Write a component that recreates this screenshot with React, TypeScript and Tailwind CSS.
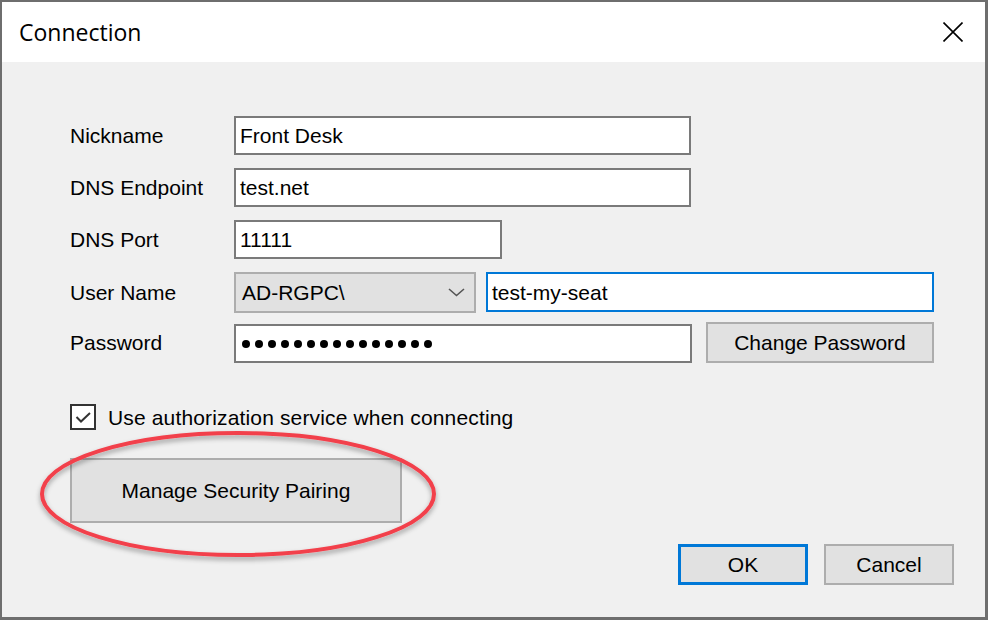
import React from "react";

const font = { fontFamily: '"Liberation Sans", Arial, sans-serif' };

function Label({ children }: { children: React.ReactNode }) {
  return <div className="w-[164px] shrink-0 text-[21px] leading-none text-black">{children}</div>;
}

function TextBox({ value, w, blue }: { value: string; w: string; blue?: boolean }) {
  return (
    <div
      className={`${w} h-full flex items-center bg-white border-2 pl-[4px] text-[21px] leading-none text-black ${
        blue ? "border-[#0078d7]" : "border-[#7a7a7a]"
      }`}
    >
      {value}
    </div>
  );
}

export default function App() {
  const dots = Array.from({ length: 15 });
  return (
    <div
      className="relative w-[988px] h-[620px] bg-[#f0f0f0] border-l-2 border-t-2 border-r-[3px] border-b-[3px] border-[#6e6e6e] flex flex-col overflow-hidden"
      style={font}
    >
      {/* Title bar */}
      <div className="h-[60px] shrink-0 bg-white flex items-center justify-between pl-[17px] pr-[22px]">
        <span className="text-[23px] text-black leading-none" style={{ fontFamily: '"Open Sans", "Liberation Sans", sans-serif' }}>
          Connection
        </span>
        <svg width="20" height="20" viewBox="0 0 20 20" className="mt-[-1px]">
          <path d="M0.5 0.5 L19.5 19.5 M19.5 0.5 L0.5 19.5" stroke="#000" strokeWidth="1.6" fill="none" />
        </svg>
      </div>

      {/* Body */}
      <div className="flex-1 flex flex-col pl-[68px] pt-[54px]">
        <div className="flex items-center h-[39px]">
          <Label>Nickname</Label>
          <TextBox value="Front Desk" w="w-[457px]" />
        </div>
        <div className="flex items-center h-[39px] mt-[13px]">
          <Label>DNS Endpoint</Label>
          <TextBox value="test.net" w="w-[457px]" />
        </div>
        <div className="flex items-center h-[39px] mt-[13px]">
          <Label>DNS Port</Label>
          <TextBox value="11111" w="w-[268px]" />
        </div>
        <div className="flex items-center h-[41px] mt-[13px]">
          <Label>User Name</Label>
          <div className="w-[242px] h-full flex items-center justify-between bg-[#e1e1e1] border-2 border-[#adadad] pl-[6px] pr-[9px] text-[21px] leading-none text-black">
            <span>AD-RGPC\</span>
            <svg width="17" height="9" viewBox="0 0 17 9">
              <path d="M1 1 L8.5 7.5 L16 1" stroke="#555" strokeWidth="1.6" fill="none" />
            </svg>
          </div>
          <div className="w-[10px]" />
          <div className="h-[40px] self-start">
            <TextBox value="test-my-seat" w="w-[448px]" blue />
          </div>
        </div>
        <div className="flex items-center h-[41px] mt-[9px]">
          <Label>Password</Label>
          <div className="w-[458px] h-[39px] mt-[2px] flex items-center gap-[5px] bg-white border-2 border-[#7a7a7a] pl-[6px]">
            {dots.map((_, i) => (
              <span key={i} className="w-[8px] h-[8px] rounded-full bg-black" />
            ))}
          </div>
          <div className="w-[14px]" />
          <div className="w-[228px] h-full flex items-center justify-center bg-[#e1e1e1] border-2 border-[#adadad] text-[21px] leading-none text-black">
            Change Password
          </div>
        </div>

        {/* Checkbox */}
        <div className="flex items-center mt-[41px] h-[26px]">
          <div className="w-[26px] h-[26px] border-2 border-[#333] bg-white flex items-center justify-center">
            <svg width="18" height="14" viewBox="0 0 18 14">
              <path d="M2.5 7 L7 11.5 L16 3" stroke="#333" strokeWidth="2" fill="none" />
            </svg>
          </div>
          <span className="ml-[12px] text-[21px] leading-none text-black tracking-[0.15px]">Use authorization service when connecting</span>
        </div>

        {/* Manage button */}
        <div className="mt-[28px] w-[332px] h-[65px] flex items-center justify-center bg-[#e1e1e1] border-2 border-[#adadad] text-[21px] leading-none text-black">
          Manage Security Pairing
        </div>

        {/* OK / Cancel */}
        <div className="flex justify-end gap-[16px] mt-[21px] pr-[31px]">
          <div className="w-[130px] h-[41px] flex items-center justify-center bg-[#e1e1e1] border-[3px] border-[#0078d7] text-[21px] leading-none text-black">
            OK
          </div>
          <div className="w-[130px] h-[41px] flex items-center justify-center bg-[#e1e1e1] border-2 border-[#adadad] text-[21px] leading-none text-black">
            Cancel
          </div>
        </div>
      </div>

      {/* Red annotation ellipse */}
      <svg className="absolute left-0 top-0 pointer-events-none" width="988" height="620" viewBox="-2 -2 988 620">
        <defs>
          <filter id="sh" x="-20%" y="-30%" width="140%" height="160%">
            <feDropShadow dx="0" dy="3" stdDeviation="2.5" floodColor="#000" floodOpacity="0.35" />
          </filter>
        </defs>
        <ellipse cx="234" cy="490" rx="196" ry="61" fill="none" stroke="#f2414b" strokeWidth="4" filter="url(#sh)" />
      </svg>
    </div>
  );
}
